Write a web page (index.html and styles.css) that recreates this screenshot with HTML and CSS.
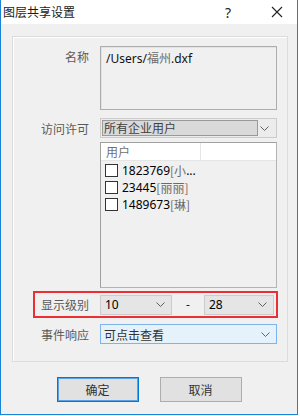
FILE: index.html
```html
<!DOCTYPE html>
<html>
<head>
<meta charset="utf-8">
<link rel="stylesheet" href="styles.css">
</head>
<body>
<div class="window">
  <div class="titlebar">
    <span class="title">图层共享设置</span>
    <span class="tb-help">?</span>
    <span class="tb-close">
      <svg width="12" height="12" viewBox="0 0 12 12"><path d="M1 1L11 11M11 1L1 11" stroke="#222" stroke-width="1.1" fill="none"/></svg>
    </span>
  </div>
  <div class="client">
    <div class="group">
      <div class="row row-top">
        <div class="label label-top">名称</div>
        <div class="textarea">/Users/<span class="cjk">福州</span>.dxf</div>
      </div>
      <div class="row row-access">
        <div class="label">访问许可</div>
        <div class="combo combo-access">
          <div class="combo-sel">所有企业用户</div>
          <svg class="chev" width="9" height="5" viewBox="0 0 9 5"><path d="M0.5 0.5L4.5 4.5L8.5 0.5" stroke="#606060" fill="none"/></svg>
        </div>
      </div>
      <div class="row row-list">
        <div class="label"></div>
        <div class="listbox">
          <div class="list-head">
            <div class="head-col">用户</div>
            <div class="head-rest"></div>
          </div>
          <div class="list-item first"><span class="cb"></span><span class="num">1823769</span><span class="br">[小</span><span class="num">...</span></div>
          <div class="list-item"><span class="cb"></span><span class="num">23445</span><span class="br">[丽丽]</span></div>
          <div class="list-item"><span class="cb"></span><span class="num">1489673</span><span class="br">[琳]</span></div>
        </div>
      </div>
      <div class="redbox">
        <div class="label label-red">显示级别</div>
        <div class="combo combo-gray combo-a">
          <span class="num">10</span>
          <svg class="chev" width="9" height="5" viewBox="0 0 9 5"><path d="M0.5 0.5L4.5 4.5L8.5 0.5" stroke="#606060" fill="none"/></svg>
        </div>
        <div class="dash">-</div>
        <div class="combo combo-gray combo-b">
          <span class="num">28</span>
          <svg class="chev" width="9" height="5" viewBox="0 0 9 5"><path d="M0.5 0.5L4.5 4.5L8.5 0.5" stroke="#606060" fill="none"/></svg>
        </div>
      </div>
      <div class="row row-event">
        <div class="label">事件响应</div>
        <div class="combo combo-blue">
          <span class="val">可点击查看</span>
          <svg class="chev" width="9" height="5" viewBox="0 0 9 5"><path d="M0.5 0.5L4.5 4.5L8.5 0.5" stroke="#606060" fill="none"/></svg>
        </div>
      </div>
    </div>
    <div class="buttons">
      <div class="btn btn-default">确定</div>
      <div class="btn">取消</div>
    </div>
  </div>
</div>
</body>
</html>
```

FILE: styles.css
```css
html, body {
  margin: 0;
  padding: 0;
  background: #ffffff;
}
body {
  font-family: "Noto Sans", "Noto Sans CJK SC", sans-serif;
  font-size: 12px;
  color: #000;
}
.window {
  width: 298px;
  height: 415px;
  box-sizing: border-box;
  border-left: 1px solid #1883d7;
  border-right: 1px solid #1883d7;
  border-bottom: 1px solid #1883d7;
  display: flex;
  flex-direction: column;
  background: #f0f0f0;
}
.titlebar {
  height: 24px;
  background: #ffffff;
  display: flex;
  align-items: center;
  flex: none;
}
.title {
  font-family: "Noto Sans CJK SC", sans-serif;
  font-size: 12px;
  color: #1a1a1a;
  margin-left: 2px;
  line-height: 24px;
}
.tb-help {
  margin-left: auto;
  font-family: "Noto Sans", sans-serif;
  font-size: 14px;
  color: #222;
  width: 12px;
  margin-right: 34px;
}
.tb-close {
  display: flex;
  margin-right: 14px;
}
.client {
  flex: 1;
  display: flex;
  flex-direction: column;
  padding: 12px 9px 0 11px;
}
.group {
  height: 326px;
  box-sizing: border-box;
  border: 1px solid #dcdcdc;
  box-shadow: inset 1px 1px 0 #ffffff;
  display: flex;
  flex-direction: column;
  padding-top: 9px;
}
.row {
  display: flex;
  align-items: center;
}
.row-top {
  align-items: flex-start;
}
.label {
  width: 76px;
  margin-right: 11px;
  text-align: right;
  font-family: "Noto Sans CJK SC", sans-serif;
  font-size: 12px;
  color: #5a5a5a;
  flex: none;
}
.label-top {
  padding-top: 2px;
  line-height: 18px;
}
.textarea {
  width: 177px;
  height: 64px;
  box-sizing: border-box;
  border: 1px solid #adadad;
  box-shadow: inset 1px 1px 0 #e3e3e3;
  background: #f0f0f0;
  padding: 2px 5px;
  font-size: 12px;
  line-height: 17px;
  color: #111;
}
.cjk {
  font-family: "Noto Sans CJK SC", sans-serif;
  color: #6a6a6a;
}
.row-access {
  margin-top: 8px;
}
.combo {
  display: flex;
  align-items: center;
  box-sizing: border-box;
}
.combo-access {
  width: 177px;
  height: 20px;
  border: 1px solid #cccccc;
  background: #ececec;
  padding: 1px;
}
.combo-sel {
  width: 156px;
  height: 16px;
  box-sizing: border-box;
  border: 1px solid #9a9a9a;
  background: #d9d9d9;
  font-family: "Noto Sans CJK SC", sans-serif;
  font-size: 12px;
  line-height: 14px;
  color: #404040;
  padding-left: 1px;
}
.chev {
  margin-left: auto;
  margin-right: 6px;
  flex: none;
}
.row-list {
  margin-top: 4px;
  align-items: flex-start;
}
.listbox {
  width: 177px;
  height: 146px;
  box-sizing: border-box;
  border: 1px solid #b4b4b4;
  border-left-color: #a0a0a0;
  border-top-color: #a0a0a0;
  background: #f0f0f0;
  display: flex;
  flex-direction: column;
}
.list-head {
  height: 17px;
  display: flex;
  background: #ffffff;
  border-bottom: 1px solid #e5e5e5;
  flex: none;
}
.head-col {
  width: 100px;
  box-sizing: border-box;
  border-right: 1px solid #e5e5e5;
  font-family: "Noto Sans CJK SC", sans-serif;
  color: #707070;
  padding-left: 5px;
  line-height: 17px;
}
.head-rest {
  flex: 1;
}
.list-item {
  height: 17px;
  display: flex;
  align-items: center;
  padding-left: 4px;
}
.list-item.first {
  margin-top: 1px;
}
.cb {
  width: 13px;
  height: 13px;
  box-sizing: border-box;
  border: 1px solid #333333;
  background: #ffffff;
  margin-right: 4px;
  flex: none;
}
.num {
  font-family: "Noto Sans", sans-serif;
  font-size: 12px;
  color: #000;
}
.br {
  font-family: "Noto Sans CJK SC", sans-serif;
  font-size: 12px;
  color: #6a6a6a;
}
.redbox {
  margin-top: 3px;
  margin-left: 20px;
  width: 245px;
  height: 27px;
  box-sizing: border-box;
  border: 2px solid #ec2f34;
  display: flex;
  align-items: center;
}
.label-red {
  width: 54px;
  margin-right: 11px;
}
.combo-gray {
  height: 20px;
  border: 1px solid #cccccc;
  background: #e5e5e5;
  padding-left: 4px;
}
.combo-a {
  width: 72px;
}
.combo-b {
  width: 70px;
}
.dash {
  width: 32px;
  text-align: center;
  font-family: "Noto Sans", sans-serif;
  font-size: 12px;
  color: #222;
}
.row-event {
  margin-top: 6px;
}
.combo-blue {
  width: 177px;
  height: 20px;
  border: 1px solid #7eb4ea;
  background: #e5f1fb;
  padding-left: 3px;
}
.val {
  font-family: "Noto Sans CJK SC", sans-serif;
  font-size: 12px;
  color: #333;
}
.buttons {
  display: flex;
  justify-content: center;
  gap: 21px;
  margin-top: 15px;
  padding-right: 2px;
}
.btn {
  width: 82px;
  height: 25px;
  box-sizing: border-box;
  border: 1px solid #adadad;
  background: #e1e1e1;
  display: flex;
  align-items: center;
  justify-content: center;
  font-family: "Noto Sans CJK SC", sans-serif;
  font-size: 12px;
  color: #333;
}
.btn-default {
  border: 1px solid #0078d7;
  box-shadow: inset 0 0 0 1px #5aa2e3;
}
```
